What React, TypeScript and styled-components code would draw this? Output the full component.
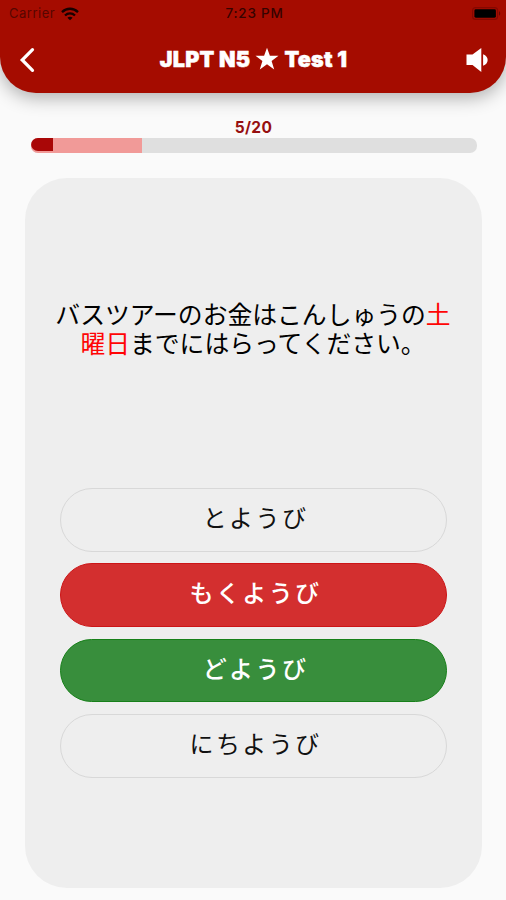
import React from "react";
import styled, { createGlobalStyle } from "styled-components";

const GlobalStyle = createGlobalStyle`
  * { box-sizing: border-box; }
  body { margin: 0; background: #fafafa; }
`;

const Screen = styled.main`
  width: 506px;
  height: 900px;
  overflow: hidden;
  background: #fafafa;
  display: flex;
  flex-direction: column;
  font-family: Inter, "Liberation Sans", sans-serif;
`;

const Header = styled.header`
  flex: none;
  height: 93px;
  background: #a50c00;
  border-radius: 0 0 36px 36px;
  box-shadow: 0 5px 18px rgba(0, 0, 0, 0.3);
`;

const StatusBar = styled.div`
  height: 27px;
  padding: 0 5px 0 9px;
  display: grid;
  grid-template-columns: 1fr auto 1fr;
  align-items: center;
  font-size: 13px;
  line-height: 27px;
  color: #350300;
`;

const Carrier = styled.div`
  display: flex;
  align-items: center;
  gap: 6px;
  letter-spacing: 0.5px;
  color: #560600;
`;

const Clock = styled.time`
  margin-right: 1px;
  font-size: 13.5px;
  font-weight: 500;
  letter-spacing: 0.75px;
`;

const BatterySlot = styled.div`
  display: flex;
  justify-content: flex-end;
`;

const TitleBar = styled.div`
  height: 66px;
  padding: 0 16px 0 18px;
  display: grid;
  grid-template-columns: 24px 1fr 24px;
  align-items: center;
  color: #fff;
`;

const IconButton = styled.button`
  display: flex;
  padding: 0;
  margin-top: -1px;
  border: 0;
  background: none;
  color: inherit;
`;

const Title = styled.h1`
  margin: 0 0 2px -1px;
  display: flex;
  align-items: center;
  justify-content: center;
  gap: 5px;
  font-size: 21.5px;
  font-weight: 900;
  letter-spacing: 0.25px;
  line-height: 24px;
  -webkit-text-stroke: 0.5px #fff;
`;

const Progress = styled.section`
  flex: none;
  margin: 25px 29.5px 0 30.5px;
  display: flex;
  flex-direction: column;
  align-items: center;
`;

const Counter = styled.div`
  height: 20px;
  line-height: 20px;
  font-size: 15.5px;
  font-weight: 700;
  letter-spacing: 0.4px;
  color: #960f10;
`;

const Track = styled.div`
  width: 100%;
  height: 14.5px;
  display: flex;
  border-radius: 7px;
  overflow: hidden;
  background: #dfdfdf;
`;

const Reached = styled.div`
  width: 25%;
  background: #f19a98;
`;

const Correct = styled.div`
  width: 22.5px;
  height: 12.5px;
  background: #a90707;
  border-bottom-left-radius: 7px;
`;

const Card = styled.section`
  flex: none;
  width: 457.5px;
  height: 710px;
  margin: 25.5px 0 0 24.5px;
  padding: 0 26px 0 35.5px;
  border-radius: 42px;
  background: #eee;
  color: #000;
  font-family: "Noto Sans CJK JP", sans-serif;
`;

const Question = styled.p`
  height: 310px;
  margin: 0 0 0 -10px;
  padding-top: 120.5px;
  text-align: center;
  white-space: nowrap;
  font-size: 24.8px;
  line-height: 29.4px;
`;

const Highlight = styled.span`
  color: #ff0505;
`;

const Answers = styled.div`
  width: 387px;
  display: flex;
  flex-direction: column;
  gap: 11.8px;
`;

type Result = "plain" | "wrong" | "right";

const fills: Record<Result, string> = { plain: "#eee", wrong: "#d32f2f", right: "#388e3c" };
const edges: Record<Result, string> = { plain: "#d8d8d8", wrong: "#cc1517", right: "#178019" };

const Answer = styled.button<{ $result: Result }>`
  height: 63.6px;
  padding: 0 0 7px 4px;
  border: 1.5px solid ${(p) => edges[p.$result]};
  border-radius: 32px;
  background: ${(p) => fills[p.$result]};
  color: ${(p) => (p.$result === "plain" ? "#111" : "#fff")};
  font-family: "Noto Sans CJK JP", sans-serif;
  font-size: 24px;
  font-weight: ${(p) => (p.$result === "plain" ? 400 : 500)};
  letter-spacing: 2.4px;
`;

const answers: { text: string; result: Result }[] = [
  { text: "とようび", result: "plain" },
  { text: "もくようび", result: "wrong" },
  { text: "どようび", result: "right" },
  { text: "にちようび", result: "plain" },
];

const Wifi = () => (
  <svg width="18" height="14" viewBox="0 0 18 14" fill="none" stroke="#180100" strokeWidth="2.3">
    <path d="M1 5.1C5.6.6 12.4.6 17 5.1M4 8.5c2.9-2.8 7.1-2.8 10 0" />
    <path d="M9 13.2 6.4 10.7c1.5-1.4 3.7-1.4 5.2 0Z" fill="#180100" stroke="none" />
  </svg>
);

const Battery = () => (
  <svg width="29" height="13" viewBox="0 0 29 13">
    <rect x=".6" y=".6" width="25" height="11.8" rx="3" fill="none" stroke="#850800" strokeWidth="1.1" />
    <rect x="2.4" y="2.3" width="21.5" height="8.4" rx="1.4" fill="#000" />
    <path d="M27 4.3c1.6.6 1.6 3.8 0 4.4Z" fill="#650600" />
  </svg>
);

const Back = () => (
  <svg width="20" height="28" viewBox="0 0 20 28" fill="none" stroke="currentColor" strokeWidth="3.2" strokeLinecap="round">
    <path d="M14.500 3.700 4.200 14l10.300 10.300" />
  </svg>
);

const Star = () => (
  <svg width="24" height="24" viewBox="0 0 24 24" fill="currentColor">
    <path d="m12 .7 2.9 8.1h8.6l-6.9 5.2 2.6 8.4-7.2-5.1-7.2 5.1L7.4 14 .5 8.8h8.6Z" />
  </svg>
);

const Speaker = () => (
  <svg width="24" height="26" viewBox="0 0 24 26" fill="currentColor">
    <path d="M.5 7.500h6L15.300 1v24l-8.800-7h-6ZM17.100 7.200c6.100 2.300 6.100 9.300 0 11.600Z" />
  </svg>
);

export default function App() {
  return (
    <Screen>
      <GlobalStyle />
      <Header>
        <StatusBar>
          <Carrier>Carrier <Wifi /></Carrier>
          <Clock>7:23 PM</Clock>
          <BatterySlot><Battery /></BatterySlot>
        </StatusBar>
        <TitleBar>
          <IconButton aria-label="Back"><Back /></IconButton>
          <Title><span>JLPT N5</span><Star /><span>Test 1</span></Title>
          <IconButton aria-label="Sound"><Speaker /></IconButton>
        </TitleBar>
      </Header>
      <Progress>
        <Counter>5/20</Counter>
        <Track><Reached><Correct /></Reached></Track>
      </Progress>
      <Card>
        <Question>
          バスツアーのお金はこんしゅうの<Highlight>土<br />曜日</Highlight>までにはらってください。
        </Question>
        <Answers>
          {answers.map((a) => <Answer key={a.text} $result={a.result}>{a.text}</Answer>)}
        </Answers>
      </Card>
    </Screen>
  );
}
